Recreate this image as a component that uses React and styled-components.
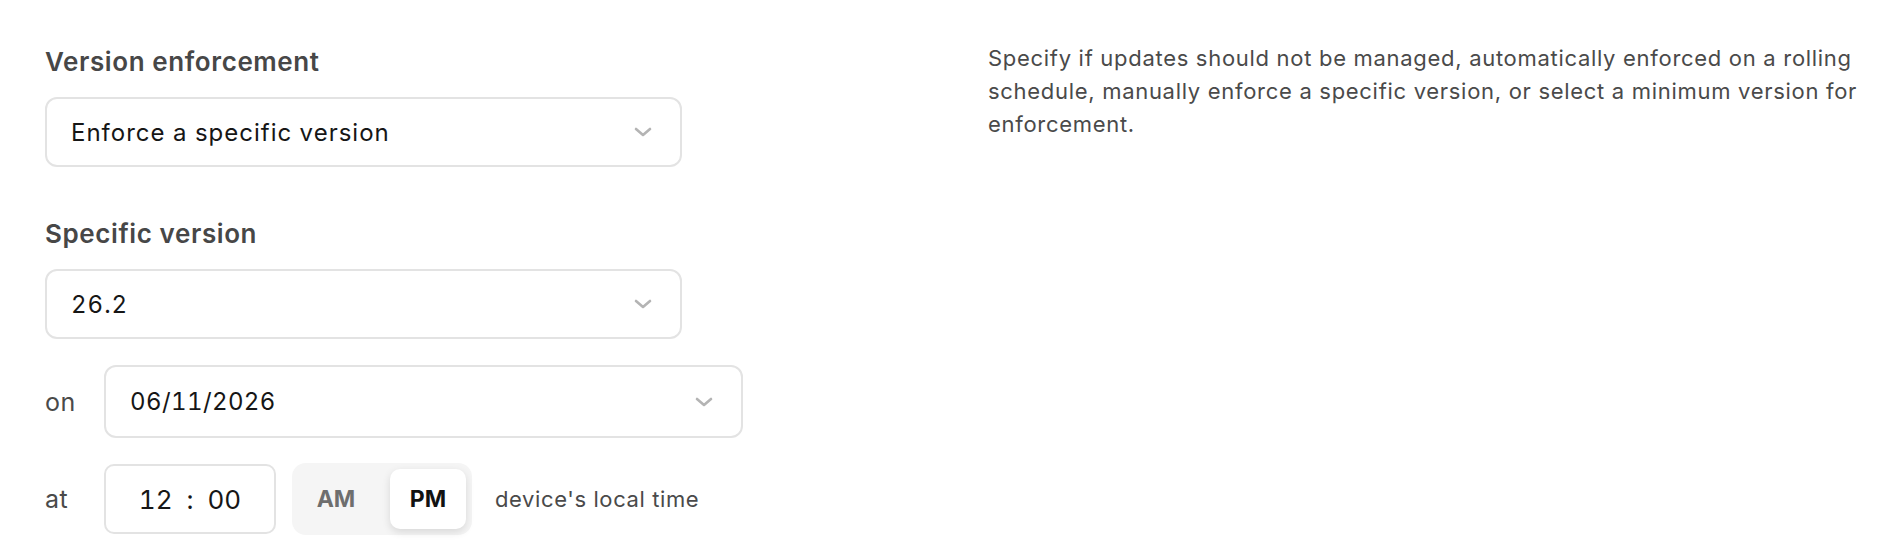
import React from "react";
import styled, { createGlobalStyle } from "styled-components";

const GlobalStyle = createGlobalStyle`
  body {
    margin: 0;
    background: #ffffff;
    font-family: Inter, "Noto Sans", "Liberation Sans", sans-serif;
  }
`;

const Page = styled.div`
  display: grid;
  grid-template-columns: minmax(0, 1fr) minmax(0, 1fr);
  column-gap: 76px;
  padding: 47px 45px 0;
  box-sizing: border-box;
  width: 1900px;
  height: 554px;
`;

const LeftColumn = styled.div`
  display: flex;
  flex-direction: column;
`;

const Description = styled.p`
  width: 890px;
  margin: -5px 0 0;
  font-size: 22px;
  letter-spacing: 0.7px;
  line-height: 33px;
  color: #4a4a4a;
`;

const Label = styled.div`
  font-size: 26px;
  letter-spacing: 0.6px;
  line-height: 30px;
  font-weight: 600;
  color: #474747;
  margin-top: ${props => props.top || 0}px;
  margin-bottom: 20px;
`;

const SelectBox = styled.div`
  display: flex;
  align-items: center;
  justify-content: space-between;
  box-sizing: border-box;
  width: ${props => props.width || 637}px;
  height: ${props => props.height || 70}px;
  padding: 0 28px 0 24px;
  border: 2px solid #e3e3e3;
  border-radius: 12px;
  background: #fff;
  font-size: 24px;
  letter-spacing: 1px;
  font-variant-numeric: tabular-nums;
  color: #161616;
`;

const DateValue = styled.span`
  letter-spacing: 0.4px;
`;

const Row = styled.div`
  display: flex;
  align-items: center;
  margin-top: ${props => props.top || 0}px;
`;

const RowLabel = styled.span`
  width: 59px;
  font-size: 25px;
  letter-spacing: 0.5px;
  color: #4a4a4a;
`;

const TimeBox = styled.div`
  display: flex;
  align-items: center;
  justify-content: center;
  gap: 14px;
  box-sizing: border-box;
  width: 172px;
  height: 70px;
  border: 2px solid #e3e3e3;
  border-radius: 10px;
  font-size: 26px;
  font-variant-numeric: tabular-nums;
  color: #161616;
`;

const Segment = styled.div`
  display: flex;
  gap: 16px;
  box-sizing: border-box;
  height: 72px;
  margin-left: 16px;
  padding: 6px;
  background: #f5f5f5;
  border-radius: 14px;
`;

const SegmentButton = styled.div`
  display: flex;
  align-items: center;
  justify-content: center;
  width: 76px;
  border-radius: 10px;
  font-size: 23px;
  font-weight: 700;
  color: ${props => (props.active ? "#121212" : "#6e6e6e")};
  background: ${props => (props.active ? "#ffffff" : "transparent")};
  box-shadow: ${props =>
    props.active ? "0 3px 8px rgba(0, 0, 0, 0.12)" : "none"};
`;

const Hint = styled.span`
  margin-left: 23px;
  font-size: 22px;
  letter-spacing: 0.6px;
  color: #4a4a4a;
`;

function Chevron() {
  return (
    <svg width="18" height="10" viewBox="0 0 18 10" fill="none">
      <path
        d="M2 2l7 6 7-6"
        stroke="#b4b4b4"
        strokeWidth="2.6"
        strokeLinecap="round"
        strokeLinejoin="round"
      />
    </svg>
  );
}

export default function App() {
  return (
    <>
      <GlobalStyle />
      <Page>
        <LeftColumn>
          <Label>Version enforcement</Label>
          <SelectBox>
            <span>Enforce a specific version</span>
            <Chevron />
          </SelectBox>

          <Label top={52}>Specific version</Label>
          <SelectBox>
            <span>26.2</span>
            <Chevron />
          </SelectBox>

          <Row top={26}>
            <RowLabel>on</RowLabel>
            <SelectBox width={639} height={73}>
              <DateValue>06/11/2026</DateValue>
              <Chevron />
            </SelectBox>
          </Row>

          <Row top={25}>
            <RowLabel>at</RowLabel>
            <TimeBox>
              <span>12</span>
              <span>:</span>
              <span>00</span>
            </TimeBox>
            <Segment>
              <SegmentButton>AM</SegmentButton>
              <SegmentButton active>PM</SegmentButton>
            </Segment>
            <Hint>device's local time</Hint>
          </Row>
        </LeftColumn>

        <Description>
          Specify if updates should not be managed, automatically enforced on a
          rolling schedule, manually enforce a specific version, or select a
          minimum version for enforcement.
        </Description>
      </Page>
    </>
  );
}
